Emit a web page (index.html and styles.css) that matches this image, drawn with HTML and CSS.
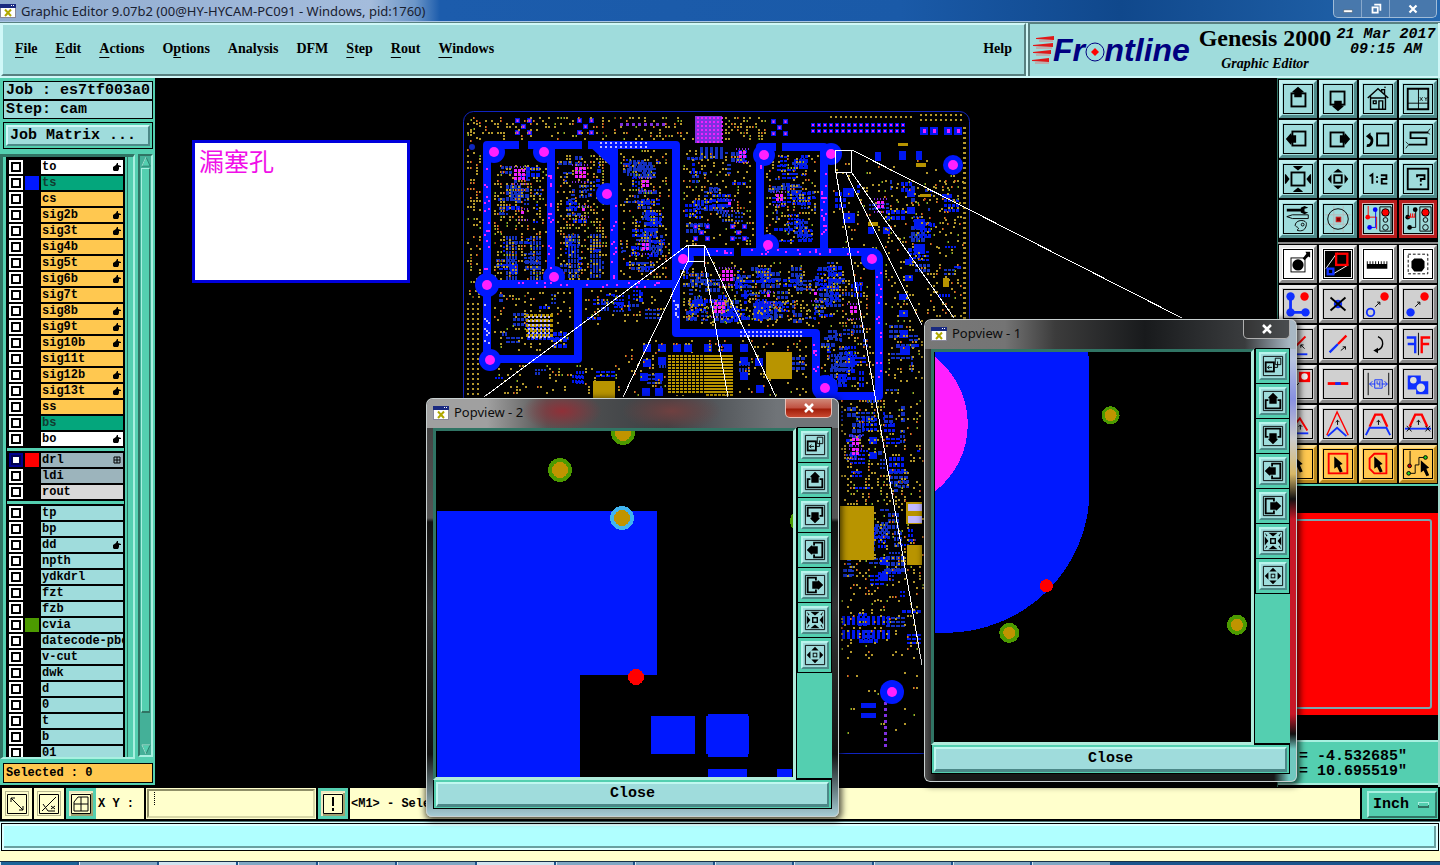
FILE: index.html
```html
<!DOCTYPE html>
<html lang="en">
<head>
<meta charset="utf-8">
<title>Graphic Editor</title>
<link rel="stylesheet" href="styles.css">
</head>
<body>
<svg class="defs" aria-hidden="true">
  <defs>
    <symbol id="app" viewBox="0 0 16 16"><rect x=".5" y="1.5" width="15" height="13" fill="#fff" stroke="#889"/><path d="M0 1h16v4H0z" fill="#1a2a80"/><path d="M11 2h1v1h-1zM13 2h1v1h-1z" fill="#fff"/><path d="M5 6.5l6 6.500M11 6.500l-6 6.500" stroke="#b0a800" stroke-width="2"/></symbol>
    <symbol id="hand" viewBox="0 0 8 8"><path d="M0 4l3-2 1-2h1v2l3 1v1H6v2L5 8H1L0 7z"/></symbol>
    <symbol id="up" viewBox="0 0 30 30"><rect x="8" y="9" width="15" height="14" fill="none" stroke="#000" stroke-width="2"/><path d="M15 2l6 5v1h-2v5h-8V8H9V7z"/></symbol>
    <symbol id="down" viewBox="0 0 30 30"><use href="#up" width="30" height="30" transform="rotate(180 15 15)"/></symbol>
    <symbol id="left" viewBox="0 0 30 30"><use href="#up" width="30" height="30" transform="rotate(-90 15 15)"/></symbol>
    <symbol id="right" viewBox="0 0 30 30"><use href="#up" width="30" height="30" transform="rotate(90 15 15)"/></symbol>
    <symbol id="home" viewBox="0 0 30 30"><path d="M4 14L15 4l11 10M7 12v14h16V12M7 14h16M10 17h3v3h-3zM16 26v-9h4v9M19 7V5h3v5M22 3l1-1" fill="none" stroke="#000" stroke-width="1.500"/></symbol>
    <symbol id="xy" viewBox="0 0 30 30"><path d="M4 4h22v22H4z" fill="none" stroke="#000" stroke-width="2"/><path d="M15.500 4v22M4 19.500h22" stroke="#000"/><path d="M17 13l3 4M20 13l-3 4M22 13l1.500 2L25 13M23.500 15v2" stroke="#000" fill="none" stroke-width=".8"/></symbol>
    <symbol id="prev" viewBox="0 0 30 30"><rect x="14" y="9" width="12" height="13" fill="none" stroke="#000" stroke-width="2"/><path d="M3 22c7 1 7-10 2-10" fill="none" stroke="#000" stroke-width="3"/><path d="M2 12l5-4v8z"/></symbol>
    <symbol id="snake" viewBox="0 0 30 30"><path d="M26 8H7v6h17v7H5" fill="none" stroke="#000" stroke-width="2"/><path d="M28 4l-3 4 3 2M2 18l3 3-3 4" fill="none" stroke="#000" stroke-width=".8"/></symbol>
    <symbol id="zin" viewBox="0 0 30 30"><rect x="8" y="8" width="14" height="14" fill="none" stroke="#000" stroke-width="2"/><path d="M10 1h10v1l-5 4-5-4zM10 29h10v-1l-5-4-5 4zM1 10v10h1l4-5-4-5zM29 10v10h-1l-4-5 4-5z"/></symbol>
    <symbol id="zout" viewBox="0 0 30 30"><rect x="11" y="11" width="8" height="8" fill="none" stroke="#000" stroke-width="2"/><path d="M10 8h10l-5-4zM10 22h10l-5 4zM8 10v10l-4-5zM22 10v10l4-5z"/></symbol>
    <symbol id="ratio" viewBox="0 0 30 30"><path d="M6 12l3-2v10M18 11h6v4h-5v5h6" fill="none" stroke="#000" stroke-width="2"/><path d="M13 12h2v2h-2zM13 17h2v2h-2z"/></symbol>
    <symbol id="help" viewBox="0 0 30 30"><rect x="4" y="4" width="22" height="22" fill="none" stroke="#000" stroke-width="2"/><path d="M14 13v-2h8v4h-4v3" fill="none" stroke="#000" stroke-width="2"/><path d="M17 20h2v2h-2z"/></symbol>
    <symbol id="tools" viewBox="0 0 30 30"><path d="M3 4h16v3H3zM18 3l4-2 4 2-4 1v3l4 1-4 2-4-2z"/><path d="M3 12.500l6-2h17v4H9zM12 22c0-7 13-7 12-1-1 8-8 7-10 6 4-3-1-3-2-5z" fill="none" stroke="#000"/><circle cx="20" cy="21" r="1.500" fill="none" stroke="#000"/></symbol>
    <symbol id="target" viewBox="0 0 30 30"><path d="M10.500 1v28M20.500 1v28M1 10.500h28M1 20.500h28" stroke="#b8b8b8"/><circle cx="15" cy="15" r="11" fill="none" stroke="#000"/><rect x="13" y="13" width="5" height="5" fill="#800" stroke="#e02020"/></symbol>
    <symbol id="light1" viewBox="0 0 30 30"><path d="M4.500 1v12h9v13" fill="none" stroke="red"/><path d="M12.500 5v19H6" fill="none" stroke="#00f"/><circle cx="12" cy="5" r="2.500" fill="#00f"/><circle cx="4" cy="13" r="2.500" fill="red"/><circle cx="6" cy="24" r="2.500" fill="#00f"/><path d="M17 2h12v26H17z" fill="#a0dada" stroke="#000"/><circle cx="23" cy="8" r="4" fill="red" stroke="#000"/><circle cx="23" cy="16" r="2.500" fill="none" stroke="#000"/><circle cx="23" cy="24" r="3" fill="none" stroke="#000"/></symbol>
    <symbol id="light2" viewBox="0 0 30 30"><path d="M4.500 1v12M12.500 5v19H6" fill="none" stroke="#000"/><circle cx="12" cy="5" r="2.500"/><circle cx="4" cy="13" r="2.500"/><circle cx="6" cy="24" r="2.500"/><path d="M4 13h8M7 13v-4M9 13v-4M11 13v-4" stroke="red"/><path d="M17 2h12v26H17z" fill="#a0dada" stroke="#000"/><circle cx="23" cy="8" r="4" fill="red" stroke="#000"/><circle cx="23" cy="16" r="2.500" fill="none" stroke="#000"/><circle cx="23" cy="24" r="3" fill="none" stroke="#000"/></symbol>
    <symbol id="add" viewBox="0 0 30 30"><rect x="7.500" y="8.500" width="15" height="15" fill="none" stroke="#000"/><circle cx="15" cy="16" r="6"/><path d="M20 9l4-5-1-2h5v6l-2-1-4 4z"/></symbol>
    <symbol id="resize" viewBox="0 0 30 30"><path d="M1 1h28v28H1z"/><path d="M2 20L14 3M9 26l17-10" stroke="#fff"/><rect x="13" y="4" width="12" height="12" fill="none" stroke="red" stroke-width="2.500"/><rect x="4" y="20" width="6" height="6" fill="none" stroke="#1030ff" stroke-width="2.500"/></symbol>
    <symbol id="ruler" viewBox="0 0 30 30"><path d="M3 12h1v3h2v-3h1v3h2v-3h1v3h2v-3h1v3h2v-3h1v3h2v-3h1v3h2v-3h1v3h2v-3h1v8H3z"/></symbol>
    <symbol id="select" viewBox="0 0 30 30"><rect x="4.500" y="4.500" width="21" height="21" fill="none" stroke="#000" stroke-dasharray="3 2"/><path d="M11 9h8l3 3v7l-3 4h-8l-3-4v-7z"/></symbol>
    <symbol id="nodes" viewBox="0 0 30 30"><path d="M7 7v17h16" fill="none" stroke="#1030ff" stroke-width="3"/><circle cx="7" cy="7" r="4.500" fill="#1030ff"/><circle cx="7" cy="24" r="4.500" fill="#1030ff"/><circle cx="23" cy="24" r="4.500" fill="#1030ff"/><circle cx="22" cy="7" r="4.500" fill="red"/></symbol>
    <symbol id="delete" viewBox="0 0 30 30"><circle cx="15" cy="15" r="4.500" fill="#1030ff"/><path d="M7 8l16 14M23 8L7 22" stroke="#000" stroke-width="2"/></symbol>
    <symbol id="copy" viewBox="0 0 30 30"><circle cx="7" cy="24" r="4" fill="none" stroke="#1030ff" stroke-width="2"/><circle cx="22" cy="7" r="4.500" fill="red"/><path d="M12 18l5-5m-3 0h3v3" fill="none" stroke="#000"/></symbol>
    <symbol id="move" viewBox="0 0 30 30"><circle cx="7" cy="24" r="4.500" fill="#1030ff"/><circle cx="22" cy="7" r="4.500" fill="red"/><path d="M12 18l5-5m-3 0h3v3" fill="none" stroke="#000"/></symbol>
    <symbol id="angle" viewBox="0 0 30 30"><path d="M5 25L23 7" stroke="red" stroke-width="2"/><path d="M5 26h20" stroke="#1030ff" stroke-width="2"/><path d="M22 20l-4-4m0 3v-3h3" fill="none" stroke="#000"/></symbol>
    <symbol id="diag" viewBox="0 0 30 30"><path d="M6 24l9-9" stroke="#1030ff" stroke-width="2.500"/><path d="M15 15l9-9" stroke="red" stroke-width="2.500"/><path d="M18 22l5-4m-3 0h3v3" fill="none" stroke="#000"/></symbol>
    <symbol id="rotate" viewBox="0 0 30 30"><path d="M15 7c7 3 7 13-2 15" fill="none" stroke="#000" stroke-width="1.500"/><path d="M10 22l5-3v6z"/></symbol>
    <symbol id="mirror" viewBox="0 0 30 30"><path d="M15.500 3v24" stroke="#000"/><path d="M3 8h9v17M4 15h8" fill="none" stroke="#1030ff" stroke-width="2.500"/><path d="M28 8h-9v17M27 15h-8" fill="none" stroke="red" stroke-width="2.500"/></symbol>
    <symbol id="polar" viewBox="0 0 30 30"><path d="M16 2h12v11H16z" fill="red"/><circle cx="22" cy="7" r="3.500" fill="#eee"/><path d="M11 19l5-5" stroke="#000"/></symbol>
    <symbol id="line" viewBox="0 0 30 30"><path d="M4 14.500h22" stroke="red" stroke-width="3"/><path d="M12 14.500h6" stroke="#1030ff" stroke-width="3"/></symbol>
    <symbol id="width" viewBox="0 0 30 30"><path d="M4.500 3v24M26.500 3v24" stroke="#000"/><path d="M6 15h6M25 15h-6M9 12l-3 3 3 3M22 12l3 3-3 3M11.500 10.500h8v9h-8zM14 12v3h3m0-3v6" fill="none" stroke="#1030ff"/></symbol>
    <symbol id="merge" viewBox="0 0 30 30"><path d="M4 6h14v6h8v14H13v-5H4z" fill="#1030ff"/><circle cx="10" cy="11" r="3.500" fill="#ddd"/><circle cx="18" cy="19" r="4.500" fill="#ddd"/></symbol>
    <symbol id="tri" viewBox="0 0 30 30"><path d="M6 22L17 9l8 13" fill="none" stroke="red" stroke-width="2"/><path d="M4 25h22" stroke="#1030ff" stroke-width="2"/><path d="M17.500 21v-5m-2 2l2-2 2 2" fill="none" stroke="#000"/></symbol>
    <symbol id="peak" viewBox="0 0 30 30"><path d="M3 27L14 2l12 25" fill="none" stroke="red" stroke-width="1.500"/><path d="M4 28l10-9 10 9" fill="none" stroke="#1030ff" stroke-width="2"/><path d="M14.500 16v-5m-2 2l2-2 2 2" fill="none" stroke="#000"/></symbol>
    <symbol id="trap" viewBox="0 0 30 30"><path d="M6 18l6-13h7l6 13" fill="none" stroke="red" stroke-width="2.500"/><path d="M2 27l4-8h18l4 8" fill="none" stroke="#1030ff" stroke-width="2"/><path d="M15.500 16v-5m-2 2l2-2 2 2" fill="none" stroke="#000"/></symbol>
    <symbol id="trap2" viewBox="0 0 30 30"><path d="M6 18l6-13h7l6 13" fill="none" stroke="red" stroke-width="2.500"/><path d="M1 20h28" stroke="#1030ff" stroke-width="2"/><path d="M15.500 16v-5m-2 2l2-2 2 2M3 17l5 6m0-6l-5 6M23 17l5 6m0-6l-5 6" fill="none" stroke="#000"/></symbol>
    <symbol id="cursor" viewBox="0 0 30 30"><path d="M11 7l9 8-3 1 3 7-3 1-3-6-3 2z"/></symbol>
    <symbol id="cur-rect" viewBox="0 0 30 30"><rect x="5" y="4" width="20" height="21" fill="none" stroke="red" stroke-width="2"/><use href="#cursor" width="30" height="30"/></symbol>
    <symbol id="cur-poly" viewBox="0 0 30 30"><path d="M11 4h13v21H11l-5-5V9z" fill="none" stroke="red" stroke-width="2"/><use href="#cursor" width="30" height="30"/></symbol>
    <symbol id="cur-net" viewBox="0 0 30 30"><path d="M6.500 1v16M5 25h7v-9h4V8h7" fill="none" stroke="#000"/><circle cx="6" cy="17" r="2" fill="#c00" stroke="#000"/><circle cx="5" cy="25" r="2" fill="#2c2" stroke="#000"/><circle cx="23" cy="8" r="2" fill="#2c2" stroke="#000"/><use href="#cursor" x="7" y="4" width="30" height="30"/></symbol>
    <symbol id="p-pop" viewBox="0 0 22 22"><rect x="3" y="7" width="9" height="10" fill="none" stroke="#000" stroke-width="2"/><path d="M13.500 2.500h6v7h-6zM12 12.500h4V6M10 12.500H5m2-2l-2 2 2 2" fill="none" stroke="#000"/></symbol>
    <symbol id="p-up" viewBox="0 0 22 22"><path d="M6 10H3v9h16v-9h-3" fill="none" stroke="#000" stroke-width="2"/><path d="M11 2l5 5v1h-1v6H7V8H6V7z"/></symbol>
    <symbol id="p-down" viewBox="0 0 22 22"><use href="#p-up" width="22" height="22" transform="rotate(180 11 11)"/></symbol>
    <symbol id="p-left" viewBox="0 0 22 22"><use href="#p-up" width="22" height="22" transform="rotate(-90 11 11)"/></symbol>
    <symbol id="p-right" viewBox="0 0 22 22"><use href="#p-up" width="22" height="22" transform="rotate(90 11 11)"/></symbol>
    <symbol id="p-in" viewBox="0 0 22 22"><rect x="8.500" y="8.500" width="5" height="5" fill="none" stroke="#000" stroke-width="1.500"/><path d="M6 2h10l-5 4zM6 20h10l-5-4zM2 6v10l4-5zM20 6v10l-4-5zM2 2l3 3-1 1zM20 2l-3 3 1 1zM2 20l3-3-1-1zM20 20l-3-3 1-1z"/></symbol>
    <symbol id="p-out" viewBox="0 0 22 22"><rect x="9" y="9" width="4" height="4" fill="none" stroke="#000"/><path d="M7 6h8l-4-4zM7 16h8l-4 4zM6 7v8l-4-4zM16 7v8l4-4z"/></symbol>
  </defs>
</svg>

<header class="titlebar">
  <svg class="app-icon"><use href="#app"/></svg>
  <span class="title-text">Graphic Editor 9.07b2 (00@HY-HYCAM-PC091 - Windows, pid:1760)</span>
  <div class="win-buttons">
    <button aria-label="Minimize"><svg viewBox="0 0 16 16"><path d="M3 9h10v3H3z" fill="#fff" stroke="#345" stroke-width=".5"/></svg></button>
    <button aria-label="Restore"><svg viewBox="0 0 16 16"><path d="M6 3h7v7M4 6h6v6H4z" fill="none" stroke="#fff" stroke-width="2"/></svg></button>
    <button class="wide" aria-label="Close"><svg viewBox="0 0 16 16"><path d="M4 4l8 8M12 4l-8 8" stroke="#fff" stroke-width="2.500"/></svg></button>
  </div>
</header>

<div class="banner">
  <nav class="menu">
    <button><u>F</u>ile</button><button><u>E</u>dit</button><button><u>A</u>ctions</button><button>O<u>p</u>tions</button><button>Analysis</button><button>DFM</button><button><u>S</u>tep</button><button><u>R</u>out</button><button><u>W</u>indows</button><button class="help">Help</button>
  </nav>
  <div class="brand">
    <svg class="logo" viewBox="0 0 164 40" role="img" aria-label="Frontline">
      <path d="M4 5l18-2v4l-18-1zM1 12l20-2v4l-20-1zM1 19l18-2v4l-18-1zM0 27l17-2v4l-17-1z" fill="#e01818"/>
      <path d="M7 8h14M4 15h16M4 22h14M3 30h14" stroke="#e08080" fill="none"/>
      <text x="21" y="28" class="logo-text">Fr<tspan class="logo-gap">o</tspan>ntline</text>
      <circle cx="63" cy="19" r="9" fill="none" stroke="#000080"/>
      <path d="M63 15l4 4-4 4-4-4z" fill="red"/>
    </svg>
    <div class="product"><strong>Genesis 2000</strong><em>Graphic Editor</em></div>
    <div class="clock"><span>21 Mar 2017</span><span>09:15 AM</span></div>
  </div>
</div>

<main class="work">
  <aside class="side">
    <div class="job-line">Job : es7tf003a0</div>
    <div class="job-line">Step: cam</div>
    <div class="matrix"><button>Job Matrix ...</button></div>
    <div class="layer-area">
      <div class="layer-well"><div class="layers" id="layers"></div></div>
      <div class="scroll"><svg viewBox="0 0 12 14"><path d="M6 1l5 11H1z" fill="#54cfb0" stroke="#287868"/><path d="M6 1L1 12" stroke="#b0f0e0"/></svg><div class="thumb"></div><div class="track"></div><svg viewBox="0 0 12 14"><path d="M1 2h10L6 13z" fill="#54cfb0" stroke="#287868"/><path d="M1 2h10M1 2l5 11" stroke="#b0f0e0"/></svg></div>
    </div>
    <div class="selected">Selected : 0</div>
  </aside>

  <svg class="board" viewBox="155 78 1122 709" preserveAspectRatio="xMinYMin meet">
    <rect x="193.500" y="141.500" width="215" height="140" fill="#fff" stroke="#0000dc" stroke-width="3"/>
    <text x="199" y="171" class="note">漏塞孔</text>
    <rect x="463.500" y="111.500" width="506" height="642" rx="10" fill="none" stroke="#1024c0"/>
    <g id="specks" shape-rendering="crispEdges"></g>
    <g class="trace">
      <path d="M519 145H487V359H578V284"/><path d="M528 145H582M588 145H676V284"/>
      <path d="M551 145V284M614 145V284M487 284H676V333H816V389"/>
      <path d="M776 147H760V252M782 147H824V252"/><path d="M684 252H734M741 252H872L879 262V396H825"/>
    </g>
    <g id="pads"></g>
    <g id="dots" shape-rendering="crispEdges"></g>
    <g class="leaders" shape-rendering="crispEdges">
      <path d="M835.500 150.500h16v22h-16zM852 150L1182 318M852 173L954 318M846 173L922 325M836 173L922 665"/>
      <path d="M688.500 245.500h16v16h-16zM688 245L484 397M688 261L623 397M704 261L728 397M705 246L776 397"/>
    </g>
  </svg>

  <aside class="right">
    <div class="tools aqua" id="tools-view"></div>
    <div class="tools gray" id="tools-edit"></div>
    <div class="overview"><div class="extent"><div class="extent-inner"></div></div></div>
    <div class="coords"><span>= -4.532685"</span><span>= 10.695519"</span></div>
  </aside>
</main>

<div class="command">
  <button class="cmd" aria-label="Snap"><svg viewBox="0 0 20 20"><path d="M.5.5h19v19H.5zM4 4l12 12M4 8V4h4M12 16h4v-4"/></svg></button>
  <button class="cmd" aria-label="Angle"><svg viewBox="0 0 20 20"><path d="M.5.5h19v19H.5zM3 17L17 3M4 10l5 7h7M12 12l4 3m0-3l-4 3"/></svg></button>
  <button class="cmd teal" aria-label="Grid"><svg viewBox="0 0 20 20"><path d="M.5.5h19v19H.5zM3 8l4-5h10v14H3zM3 10h14M10 3v14"/></svg></button>
  <label class="xy" for="coord">X Y :</label>
  <input id="coord" type="text">
  <button class="cmd teal" aria-label="Apply"><svg viewBox="0 0 20 20"><path d="M.5.5h19v19H.5z"/><path d="M10 3v9M10 14v3" stroke-width="2"/></svg></button>
  <div class="prompt">&lt;M1&gt; - Select</div>
  <div class="units"><select aria-label="Units"><option>Inch</option></select></div>
</div>
<div class="message"><div></div></div>
<div class="gap"></div>
<footer class="taskbar"><i class="start"></i><i></i><i class="lit"></i><i></i><i></i><i></i><i class="lit"></i><i></i><i></i><i></i><i></i><i></i><i></i><i></i></footer>

<section class="pop pop2" aria-label="Popview - 2">
  <div class="pop-title"><svg class="app-icon"><use href="#app"/></svg><span>Popview - 2</span><button class="pop-x red" aria-label="Close"><svg viewBox="0 0 12 10"><path d="M2 1l8 8M10 1L2 9" stroke="#fff" stroke-width="2.500"/></svg></button></div>
  <div class="pop-body">
    <svg class="pop-canvas" viewBox="436 431 357 346" shape-rendering="crispEdges">
      <path d="M437 511H657V675H580V777H437zM651 716h44v38h-44zM708 714h40v43h-40zM706 716h43v38h-43zM708 769h39v8h-39zM777 769h15v8h-15z" fill="#0018ff"/>
      <g fill="#4c9a00"><circle cx="560" cy="470" r="12"/><circle cx="623" cy="433" r="12"/><circle cx="803" cy="521" r="13"/></g>
      <circle cx="622" cy="518" r="12" fill="#40b4f0"/>
      <g fill="#c09400"><circle cx="560" cy="470" r="8"/><circle cx="623" cy="433" r="8"/><circle cx="622" cy="518" r="8"/></g>
      <circle cx="636" cy="677" r="8" fill="red"/>
    </svg>
    <div class="pop-tools"></div>
  </div>
  <div class="pop-close"><button>Close</button></div>
</section>

<section class="pop pop1" aria-label="Popview - 1">
  <div class="pop-title"><svg class="app-icon"><use href="#app"/></svg><span>Popview - 1</span><button class="pop-x" aria-label="Close"><svg viewBox="0 0 12 10"><path d="M2 1l8 8M10 1L2 9" stroke="#fff" stroke-width="2.500"/></svg></button></div>
  <div class="pop-body">
    <svg class="pop-canvas" viewBox="934 352 316 389" shape-rendering="crispEdges">
      <path d="M935 352H1088V356H1089V490A144 142 0 0 1 945 632H935z" fill="#0018ff"/>
      <path d="M935 357A85 85 0 0 1 935 491z" fill="#ff20ff"/>
      <g fill="#4c9a00"><circle cx="1110" cy="415" r="9"/><circle cx="1009" cy="632" r="10"/><circle cx="1236" cy="624" r="10"/></g>
      <g fill="#c09400"><circle cx="1110" cy="415" r="6"/><circle cx="1009" cy="632" r="6"/><circle cx="1236" cy="624" r="6"/></g>
      <circle cx="1046" cy="585" r="6.500" fill="red"/>
    </svg>
    <div class="pop-tools"></div>
  </div>
  <div class="pop-close"><button>Close</button></div>
</section>
<script src="script.js"></script>
</body>
</html>
```
FILE: styles.css
```css
:root {
  --teal: #54cfb0;
  --teal-dark: #307464;
  --teal-light: #a8f0e0;
  --aqua: #9fdcdc;
  --aqua-light: #d0f8f8;
  --aqua-dark: #4c8888;
  --orange: #ffc850;
  --cream: #ffffcc;
  --mono: "Liberation Mono", monospace;
  --serif: "Liberation Serif", serif;
}
* { box-sizing: border-box; }
body {
  margin: 0;
  height: 100vh;
  display: flex;
  flex-direction: column;
  position: relative;
  overflow: hidden;
  background: #000;
  font: bold 12px/16px var(--mono);
  color: #000;
}
button, input, select {
  font: inherit;
  color: inherit;
  margin: 0;
  padding: 0;
  border: 0;
  border-radius: 0;
  background: none;
}
svg { display: block; }
.defs { position: absolute; width: 0; height: 0; }
.app-icon { width: 16px; height: 16px; flex: none; }

.titlebar {
  flex: none;
  height: 22px;
  display: flex;
  align-items: center;
  gap: 5px;
  background: linear-gradient(90deg, #90acd0 0, #a4bcdc 370px, #6c96c8 415px, #1c5cac 440px, #1a5aa8 900px, #10488c 1120px, #2468b0 100%);
  border-bottom: 1px solid #a8c4e4;
  color: #182030;
}
.title-text, .pop-title span { font: 13px/20px "Noto Sans", sans-serif; }
.win-buttons {
  margin: 0 3px 0 auto;
  align-self: flex-start;
  display: flex;
  height: 18px;
  border: 1px solid #a0bcd8;
  border-top: 0;
  border-radius: 0 0 5px 5px;
  background: #4878ac;
}
.win-buttons button { width: 28px; border-right: 1px solid #88a8cc; display: grid; place-items: center; }
.win-buttons .wide { width: 46px; border: 0; }
.win-buttons svg { width: 14px; height: 14px; }

.banner { flex: none; height: 56px; display: flex; background: var(--aqua-light); border-top: 1px solid #588080; }
.menu {
  flex: 1;
  display: flex;
  align-items: center;
  gap: 18px;
  padding: 0 12px 2px;
  margin: 0 1px 2px;
  background: var(--aqua);
  border: 2px solid var(--aqua-light);
  border-right-color: #588080;
  border-bottom-color: #588080;
}
.menu button { font: bold 14px/18px var(--serif); }
.menu u { text-underline-offset: 4px; text-decoration-thickness: 1px; }
.menu .help { margin-left: auto; }
.brand {
  width: 410px;
  display: flex;
  border: 2px solid #588080;
  border-width: 1px 0 0 2px;
  margin: 0 2px 2px 1px;
  padding-left: 2px;
  background: var(--aqua);
}
.logo { width: 164px; height: 40px; margin-top: 9px; }
.logo-text { font: italic bold 32px "Liberation Sans", sans-serif; fill: #000080; }
.logo-gap { fill: transparent; }
.product { flex: 1; display: flex; flex-direction: column; align-items: center; white-space: nowrap; }
.product strong { font: bold 24px/29px var(--serif); }
.product em { font: italic bold 14px/22px var(--serif); }
.clock { width: 104px; display: flex; flex-direction: column; align-items: center; font: italic bold 15px/15px var(--mono); padding-top: 3px; }

.work { flex: 1; min-height: 0; display: flex; }
.side {
  width: 155px;
  flex: none;
  display: flex;
  flex-direction: column;
  padding: 3px 2px 2px 3px;
  background: var(--teal);
  margin-bottom: 2px;
}
.job-line { height: 19px; margin-bottom: 1px; padding-left: 2px; border: 1px solid #000; background: var(--aqua); font: bold 15px/17px var(--mono); white-space: nowrap; overflow: hidden; }
.job-line + .job-line { margin-top: -1px; }
.matrix { border: 1px solid #000; padding: 2px; margin: 2px 0 5px; height: 27px; background: var(--teal); }
.matrix button { width: 100%; height: 21px; text-align: left; padding-left: 2px; background: var(--aqua); font-size: 15px; line-height: 17px; border: 2px solid; border-color: var(--aqua-light) var(--aqua-dark) var(--aqua-dark) var(--aqua-light); }
.layer-area { flex: 1; min-height: 0; display: flex; gap: 3px; margin-bottom: 4px; }
.layer-well { flex: 1; overflow: hidden; border-left: 3px solid var(--teal-dark); border-top: 3px solid var(--teal-dark); border-right: 2px solid var(--teal-light); border-bottom: 2px solid var(--teal-light); margin-left: -3px; padding: 1px 9px 0 4px; }
.layers { box-shadow: 0 0 0 1px #000, 2px 0 0 1px var(--teal), 2px 0 0 2px var(--teal-dark); }
.group { background: #000; padding: 1px 0 1px 1px; margin-bottom: 3px; }
.group + .group { box-shadow: 0 -3px 0 var(--teal); }
.layer { height: 16px; padding: 1px; display: grid; grid-template-columns: 14px 14px 1fr; gap: 2px; }
.layer input { appearance: none; width: 14px; height: 14px; background: #fff; border: 2px solid #fff; outline: 2px solid #000; outline-offset: -4px; }
.layer input:checked { background: linear-gradient(#fff, #fff) center / 6px 6px no-repeat #000090; border-color: #000090; outline-color: #000050; }
.swatch.s-blue { background: #0018ff; }
.swatch.s-red { background: red; }
.swatch.s-green { background: #4c9a00; }
.name { display: flex; justify-content: space-between; align-items: center; padding: 0 2px 0 1px; overflow: hidden; white-space: nowrap; line-height: 14px; background: var(--aqua); }
.name svg { width: 8px; height: 8px; flex: none; }
.name.white { background: #fff; }
.name.green { background: #04a67c; color: #123c30; }
.name.orange { background: var(--orange); }
.name.steel { background: #9cb4bc; }
.name.silver { background: #d8d8d8; }
.scroll { width: 15px; padding: 0 1px; display: flex; flex-direction: column; border: 2px solid; border-color: var(--teal-dark) var(--teal-light) var(--teal-light) var(--teal-dark); background: #44b098; margin-bottom: 2px; }
.scroll svg { height: 12px; width: 10px; }
.thumb { flex: 18; border: 2px solid; border-color: var(--teal-light) var(--teal-dark) var(--teal-dark) var(--teal-light); border-width: 1px 1px 2px; background: var(--teal); }
.track { flex: 1; }
.selected { height: 20px; border: 1px solid #000; background: var(--orange); padding-left: 2px; line-height: 18px; }

.board { flex: 1; min-width: 0; height: 100%; }
.note { font: 25px "Noto Sans CJK SC", sans-serif; fill: #f010e8; }
.trace path { fill: none; stroke: #0018ff; stroke-width: 8; stroke-linejoin: round; }
.leaders path { fill: none; stroke: #fff; }

.right { width: 163px; flex: none; display: flex; flex-direction: column; background: #000; border-left: 1px solid var(--teal-dark); border-right: 2px solid #a0d8cc; }
.tools { display: grid; grid-template-columns: repeat(4, 1fr); gap: 2px; padding: 1px 1px 1px; justify-items: center; border-top: 1px solid var(--teal-dark); }
.tools button { width: 38px; height: 38px; padding: 1px; background: var(--aqua); border: 3px solid; border-color: #c0f0f0 #508c8c #508c8c #c0f0f0; }
.tools svg { width: 30px; height: 30px; border: 1px solid #000; }
.tools.gray { margin-top: 3px; border-top: 2px solid #888; }
.tools.gray button { background: #d0d0d0; border-color: #ececec #888 #888 #ececec; }
.tools.gray button:nth-child(-n+4) { background: #fff; }
.tools.gray button:nth-child(n+21) { background: var(--orange); border-color: #ffe090 #b88820 #b88820 #ffe090; }
.tools.aqua button:nth-child(n+15) { border-color: #b81c1c; background: #d8b0b0; }
.tools.aqua button:nth-child(n+15) svg { background: var(--aqua); }
.overview { flex: 1; padding: 27px 0 25px; border-top: 2px solid var(--teal); background: #000; }
.extent { height: 100%; padding: 6px; background: red; }
.extent-inner { height: 100%; border: 2px solid #7aa8b0; border-radius: 3px; }
.coords { height: 45px; border-top: 2px solid var(--teal-light); border-bottom: 2px solid var(--teal-light); margin-bottom: 2px; background: var(--teal); display: flex; flex-direction: column; padding: 7px 0 0 21px; font: bold 15px/15px var(--mono); }

.command { flex: none; height: 34px; display: flex; gap: 2px; padding: 1px 2px 2px; background: #000; }
.cmd { width: 30px; background: var(--cream); border: 3px solid var(--cream); box-shadow: inset 0 0 0 1px #b8b890; padding: 2px; }
.cmd.teal { border-color: var(--teal); box-shadow: inset 1px 1px 0 1px #eee8c0, inset -1px -1px 0 1px #a0a070; }
.cmd svg { width: 20px; height: 20px; fill: none; stroke: #000; stroke-width: 1; }
.xy { width: 48px; margin-left: -2px; padding-left: 2px; background: var(--cream); line-height: 32px; white-space: nowrap; }
.command input { width: 170px; background: repeating-linear-gradient(#000 0 1px, transparent 1px 2px) 5px 1px / 1px 14px no-repeat, var(--cream); border: 3px solid; border-color: #909068 #d8d8a8 #d8d8a8 #909068; outline: 1px solid var(--cream); outline-offset: -1px; }
.prompt { flex: 1; padding-left: 1px; background: var(--cream); line-height: 32px; white-space: nowrap; }
.units { width: 76px; padding: 3px 1px 1px 5px; background: var(--teal); }
.units select { appearance: none; width: 100%; height: 27px; padding-left: 4px; font-size: 15px; border: 2px solid; border-color: var(--teal-light) var(--teal-dark) var(--teal-dark) var(--teal-light); background: linear-gradient(var(--teal), var(--teal)) right 7px center / 9px 3px no-repeat, linear-gradient(var(--teal-light) 50%, var(--teal-dark) 50%) right 6px center / 11px 6px no-repeat, var(--teal); }
.message { flex: none; height: 30px; padding: 1px; background: #e0ffff; border-top: 1px solid #507878; }
.message div { height: 28px; border: 1px solid #000; background: #b0ffff; box-shadow: inset 0 0 0 2px #dcffff, inset -3px -3px 0 1px #68a0a0; }
.gap { flex: none; height: 10px; background: var(--cream); }
.taskbar { flex: none; height: 4px; display: flex; gap: 2px; background: #1c548c; border-top: 1px solid #183048; padding-right: 330px; }
.taskbar i { flex: 1; background: #80a8c4; border-left: 1px solid #d8e8f0; }
.taskbar .start { background: #1c6498; }
.taskbar .lit { background: #d0e4f0; }

.pop { position: absolute; padding: 0 7px 8px; border-radius: 7px 7px 6px 6px; box-shadow: inset 0 0 0 1px #c8d0d0, 1px 2px 6px 2px #000a; }
.pop2 { left: 426px; top: 398px; width: 413px; background: linear-gradient(#777, #444 28px, #555 120px, #111 124px, #333 50%, #111 85%, #a8d0d8); }
.pop1 { left: 924px; top: 319px; width: 373px; background: linear-gradient(90deg, #555, #181818 12px, #181818 350px, transparent 365px), linear-gradient(#aab8c4, #b8c4e0 40px, #8890e0 80px, #ccc 120px, #d8b868 155px, #111 180px, #c81828 200px, #c81828 395px, #111 415px, #70c8c0 430px); }
.pop-title { height: 29px; margin: 1px -6px 0; padding-left: 6px; border-radius: 6px 6px 0 0; display: flex; align-items: flex-start; gap: 5px; color: #0c0c0c; }
.pop-title .app-icon { margin-top: 6px; }
.pop-title span { margin-top: 3px; }
.pop2 .pop-title { background: radial-gradient(ellipse 40px 20px at 135px 12px, #903038, transparent), radial-gradient(ellipse 50px 20px at 245px 12px, #704040, transparent), linear-gradient(90deg, #a0a0a0 0 60px, #555 120px, #3c4044 240px, #707478 350px); }
.pop1 .pop-title { background: linear-gradient(90deg, #787878 0, #747474 80px, #3c3c3c 130px, #181a1c 220px, #3a3c3e 320px, #a8b8c4 365px); }
.pop-x { margin: 0 6px 0 auto; width: 47px; height: 19px; border: 1px solid #b0b0b0; border-top: 0; border-radius: 0 0 5px 5px; display: grid; place-items: center; background: #333c; }
.pop-x svg { width: 12px; height: 10px; }
.pop-x.red { background: linear-gradient(#d08878, #c05040 9px, #a01c08 10px, #c84830); border-color: #e8c0b8; }
.pop-body { display: flex; background: #000; }
.pop-canvas { flex: 1; min-width: 0; border: 3px solid; border-color: var(--teal-dark) #b0ecdc #b0ecdc var(--teal-dark); background: #000; }
.pop-tools { width: 36px; padding: 0 1px; display: flex; flex-direction: column; gap: 1px; background: var(--teal); border-left: 1px solid #000; border-bottom: 2px solid #000; }
.pop-tools button { height: 34px; padding: 3px; background: var(--teal); border: 0; outline: 1px solid #000; }
.pop-tools svg { width: 28px; height: 28px; padding: 1px; background: var(--aqua); border: 2px solid; border-color: #b8f4ec #4c8c88 #4c8c88 #b8f4ec; }
.pop-close { height: 29px; padding: 2px; background: var(--teal); border: 1px solid #000; border-top: 0; }
.pop-close button { width: 100%; height: 25px; font-size: 15px; line-height: 18px; background: var(--aqua); border: 3px solid; border-color: #c0f8f0 #4c8888 #4c8888 #c0f8f0; border-width: 2px 2px 3px; }
```
FILE: script.js
```js
const groups = [
  [['to','white','h'],['ts','green','','blue'],['cs','orange'],['sig2b','orange','h'],['sig3t','orange','h'],['sig4b','orange'],['sig5t','orange','h'],['sig6b','orange','h'],['sig7t','orange'],['sig8b','orange','h'],['sig9t','orange','h'],['sig10b','orange','h'],['sig11t','orange'],['sig12b','orange','h'],['sig13t','orange','h'],['ss','orange'],['bs','green'],['bo','white','h']],
  [['drl','steel','g','red'],['ldi','steel'],['rout','silver']],
  [['tp'],['bp'],['dd','','h'],['npth'],['ydkdrl'],['fzt'],['fzb'],['cvia','','','green'],['datecode-pbc'],['v-cut'],['dwk'],['d'],['0'],['t'],['b'],['01']]
];
const marks = {
  h: '<svg><use href="#hand"/></svg>',
  g: '<svg viewBox="0 0 8 8"><path d="M1 1h6v6H1zM1 4h6M4 1v6" fill="none" stroke="#000"/></svg>'
};
document.getElementById('layers').innerHTML = groups.map(g => '<div class="group">' + g.map(([n, c, m, s]) =>
  `<label class="layer"><input type="checkbox"${n === 'drl' ? ' checked' : ''}><span class="swatch${s ? ' s-' + s : ''}"></span><span class="name ${c || ''}"><span>${n}</span>${marks[m] || ''}</span></label>`).join('') + '</div>').join('');

const buttons = list => list.split(' ').map(i => `<button aria-label="${i}"><svg><use href="#${i}"/></svg></button>`).join('');
const framed = list => list.split(' ').map(i => `<button aria-label="${i}"><svg viewBox="0 0 24 24"><path d="M1.5 1.5h21v21h-21z" fill="none" stroke="#000"/><use href="#${i}" x="1" y="1" width="22" height="22"/></svg></button>`).join('');
document.getElementById('tools-view').innerHTML = buttons('up down home xy left right prev snake zin zout ratio help tools target light1 light2');
document.getElementById('tools-edit').innerHTML = buttons('add resize ruler select nodes delete copy move angle diag rotate mirror polar line width merge tri peak trap trap2 cursor cur-rect cur-poly cur-net');
document.querySelectorAll('.pop-tools').forEach(e => { e.innerHTML = framed('p-pop p-up p-down p-left p-right p-in p-out'); });

let seed = 91;
const rnd = () => {
  seed = (seed * 1664525 + 1013904223) % 4294967296;
  return seed / 4294967296;
};
const color = { gold: '#b4982c', ochre: '#b89400', red: '#b02810', green: '#287010', blue: '#0018f0', dim: '#1430c0', mag: '#f020ff', vio: '#8030e0', lav: '#c0b8ff', black: '#000' };
let d = {};
const put = (c, x, y, w, h) => { d[c] = (d[c] || '') + `M${x} ${y}h${w}v${h}h${-w}z`; };
const flush = id => {
  document.getElementById(id).innerHTML = Object.keys(d).map(c => `<path fill="${color[c]}" d="${d[c]}"/>`).join('');
  d = {};
};
const scatter = (x, y, w, h, n) => {
  for (let i = 0; i < n; i++) {
    const px = x + Math.floor(rnd() * w / 3) * 3, py = y + Math.floor(rnd() * h / 3) * 3, r = rnd();
    put('gold', px, py, 2, 2);
    if (r < .22) put('red', px + 1, py, 1, 2);
    else if (r < .34) put('green', px, py, 1, 2);
  }
};
const grid = (c, x, y, cols, rows, dx, dy, w, h) => {
  for (let j = 0; j < rows; j++) for (let i = 0; i < cols; i++) put(c, x + i * dx, y + j * dy, w, h);
};
/* each cluster gets its own pad size and pitch */
const chips = (x, y, w, h, n) => {
  for (let i = 0; i < n; i++) {
    const c = 1 + Math.floor(rnd() * 4), r = 1 + Math.floor(rnd() * 3);
    const pw = 2 + Math.floor(rnd() * 3), ph = 2 + Math.floor(rnd() * 3);
    grid(rnd() < .6 ? 'dim' : 'blue', x + Math.floor(rnd() * (w - c * (pw + 1))), y + Math.floor(rnd() * (h - r * (ph + 2))), c, r, pw + 1, ph + 2, pw, ph);
  }
};
const chip = (x, y, s) => {
  grid('vio', x - s - 3, y - s - 3, Math.floor(s / 2) + 3, 2, 3, s * 2 + 5, 1, 2);
  grid('mag', x - s, y - s, Math.floor(s / 2), Math.floor(s / 2), 4, 4, 3, 3);
};
const star = (x, y) => {
  [[0, 0], [-6, -6], [6, -6], [-6, 6], [6, 6]].forEach(([a, b]) => { put('blue', x + a - 2, y + b - 2, 5, 5); put('vio', x + a - 1, y + b - 1, 3, 3); put('mag', x + a, y + b, 1, 2); });
};

/* component fields: x, y, w, h, chip groups, via dots */
[
  [494, 165, 52, 68, 18, 180], [494, 233, 52, 46, 8, 110], [557, 155, 50, 75, 18, 180], [557, 230, 50, 50, 8, 110],
  [620, 150, 50, 130, 55, 210], [766, 155, 52, 90, 40, 150], [683, 150, 70, 95, 26, 180],
  [683, 262, 186, 64, 90, 330], [685, 300, 126, 26, 16, 80], [821, 325, 52, 66, 32, 70],
  [494, 292, 78, 60, 12, 90], [585, 290, 80, 35, 14, 50], [495, 365, 125, 30, 6, 60],
  [625, 340, 185, 56, 12, 170], [833, 160, 130, 90, 8, 120], [885, 180, 78, 140, 18, 190],
  [841, 400, 82, 100, 30, 220], [841, 500, 82, 100, 36, 200], [841, 600, 82, 60, 6, 80], [841, 672, 82, 70, 0, 20],
  [885, 320, 38, 75, 8, 60]
].forEach(([x, y, w, h, c, n]) => { chips(x, y, w, h, c); scatter(x, y, w, h, n); });
scatter(467, 119, 15, 165, 95);
scatter(467, 117, 228, 23, 150);
scatter(725, 117, 40, 23, 60);
scatter(466, 287, 15, 12, 10);
grid('gold', 467, 303, 3, 19, 5, 5, 2, 2);
grid('gold', 963, 127, 1, 124, 5, 5, 3, 2);
grid('gold', 830, 116, 17, 1, 5, 4, 2, 2);
grid('gold', 920, 114, 9, 2, 5, 5, 2, 2);
/* connector block and header rows */
put('vio', 695, 116, 27, 27);
grid('mag', 697, 117, 7, 7, 4, 4, 2, 2);
grid('dim', 700, 147, 5, 1, 5, 4, 3, 12);
grid('blue', 811, 123, 16, 2, 6, 6, 4, 4);
grid('mag', 812, 124, 16, 2, 6, 6, 2, 2);
grid('vio', 620, 123, 8, 1, 6, 6, 3, 3);
[[523, 126], [585, 126], [779, 127], [701, 232], [738, 232]].forEach(p => star(...p));
[[520, 175, 6], [581, 173, 6], [646, 184, 4], [646, 247, 4], [743, 155, 4], [780, 198, 4], [728, 276, 6], [720, 308, 6], [817, 295, 3], [855, 311, 5], [881, 205, 4], [524, 214, 3], [585, 211, 3], [731, 205, 3], [770, 297, 3], [856, 442, 4], [856, 452, 4]].forEach(c => chip(...c));
/* dense packages */
grid('dim', 506, 236, 4, 9, 3, 5, 2, 4);
grid('dim', 530, 236, 4, 9, 3, 5, 2, 4);
grid('dim', 568, 234, 4, 9, 3, 5, 2, 4);
grid('dim', 590, 234, 4, 9, 3, 5, 2, 4);
put('black', 666, 353, 72, 42);
grid('ochre', 668, 355, 16, 13, 4, 3, 3, 2);
grid('ochre', 706, 355, 7, 14, 4, 3, 3, 2);
put('ochre', 766, 352, 26, 27);
put('black', 778, 352, 2, 27); put('black', 766, 365, 26, 2);
for (let i = 0; i < 26; i++) put('black', 766 + Math.floor(rnd() * 12) * 2, 352 + Math.floor(rnd() * 13) * 2, 2, 3);
put('ochre', 593, 381, 22, 17);
for (let i = 0; i < 20; i++) put('black', 593 + Math.floor(rnd() * 10) * 2, 381 + Math.floor(rnd() * 7) * 2, 2, 3);
grid('ochre', 526, 314, 7, 5, 4, 5, 3, 3); grid('lav', 528, 316, 6, 6, 4, 4, 2, 2);
grid('blue', 527, 325, 6, 4, 4, 4, 3, 3);
put('ochre', 840, 506, 34, 54); grid('vio', 841, 520, 1, 5, 4, 4, 19, 1);
for (let i = 0; i < 46; i++) put('black', 846 + Math.floor(rnd() * 13) * 2, 507 + Math.floor(rnd() * 25) * 2, 3, 2);
put('ochre', 906, 502, 16, 22); put('lav', 908, 504, 14, 7); put('lav', 908, 516, 14, 7);
put('ochre', 907, 545, 15, 20);
for (let i = 0; i < 10; i++) put('black', 907 + Math.floor(rnd() * 6) * 2, 546 + Math.floor(rnd() * 9) * 2, 2, 2);
grid('blue', 842, 616, 10, 2, 5, 14, 3, 9);
[[861, 703, 15, 5], [861, 713, 15, 5]].forEach(r => put('blue', ...r));
/* discrete pads */
[[875, 152, 6, 9], [899, 151, 7, 9], [916, 151, 6, 9], [843, 188, 11, 9], [843, 213, 12, 10], [907, 190, 8, 7], [907, 207, 8, 7], [914, 219, 11, 10], [914, 244, 11, 10], [905, 259, 8, 6], [905, 275, 8, 6], [899, 294, 9, 6], [899, 310, 9, 7], [942, 194, 10, 4], [868, 227, 6, 7], [883, 227, 7, 7], [900, 330, 8, 8], [900, 346, 10, 9], [869, 437, 8, 7], [869, 452, 8, 7], [880, 557, 8, 8], [880, 573, 8, 8]].forEach(r => put('blue', ...r));
[[920, 127], [930, 127], [944, 127], [954, 127]].forEach(([x, y]) => { put('blue', x, y, 8, 8); put('mag', x + 3, y + 2, 3, 4); });
[[643, 344], [658, 344], [673, 344], [684, 344], [704, 344], [724, 344], [740, 344], [643, 359], [658, 357], [740, 357], [755, 358], [640, 373], [655, 373], [740, 372], [756, 385], [642, 388], [655, 388]].forEach(([x, y]) => put('blue', x, y, 8, 8));
[[916, 163, 10, 4], [898, 143, 10, 3], [868, 222, 10, 4], [920, 194, 11, 3], [943, 278, 6, 9]].forEach(r => put('ochre', ...r));
grid('vio', 884, 702, 1, 8, 4, 6, 3, 3);
flush('specks');

/* pads on the copper pour */
document.getElementById('pads').innerHTML = [[494, 152, 11], [544, 152, 11], [607, 194, 11], [487, 285, 12], [554, 277, 11], [490, 360, 11], [683, 259, 11], [764, 155, 11], [831, 154, 11], [768, 245, 11], [872, 259, 11], [825, 388, 13], [953, 165, 10], [892, 692, 12]]
  .map(([x, y, r]) => `<circle cx="${x}" cy="${y}" r="${r}" fill="#0018ff"/><circle cx="${x}" cy="${y}" r="5" fill="#ff20ff"/>`).join('') + '<circle cx="472" cy="147" r="3" fill="#1028c0"/><path d="M588 145h26v24z" fill="#0018ff"/>';
const along = (c, x, y, w, h, n) => { for (let i = 0; i < n; i++) put(c, x + Math.floor(rnd() * w / 2) * 2, y + Math.floor(rnd() * h / 2) * 2, 2, 2); };
[[484, 168, 6, 105, 16], [548, 165, 6, 105, 16], [611, 205, 6, 75, 12], [510, 282, 150, 5, 20], [821, 165, 6, 80, 20], [745, 249, 115, 6, 18], [876, 272, 6, 118, 18], [712, 250, 20, 4, 5], [813, 340, 6, 40, 8], [760, 165, 2, 8, 3]].forEach(a => along('mag', ...a));
grid('lav', 600, 142, 10, 2, 5, 4, 2, 2);
grid('lav', 740, 331, 16, 2, 4, 4, 2, 2);
along('lav', 484, 300, 6, 45, 10);
along('lav', 673, 300, 6, 25, 8);
flush('dots');
```
